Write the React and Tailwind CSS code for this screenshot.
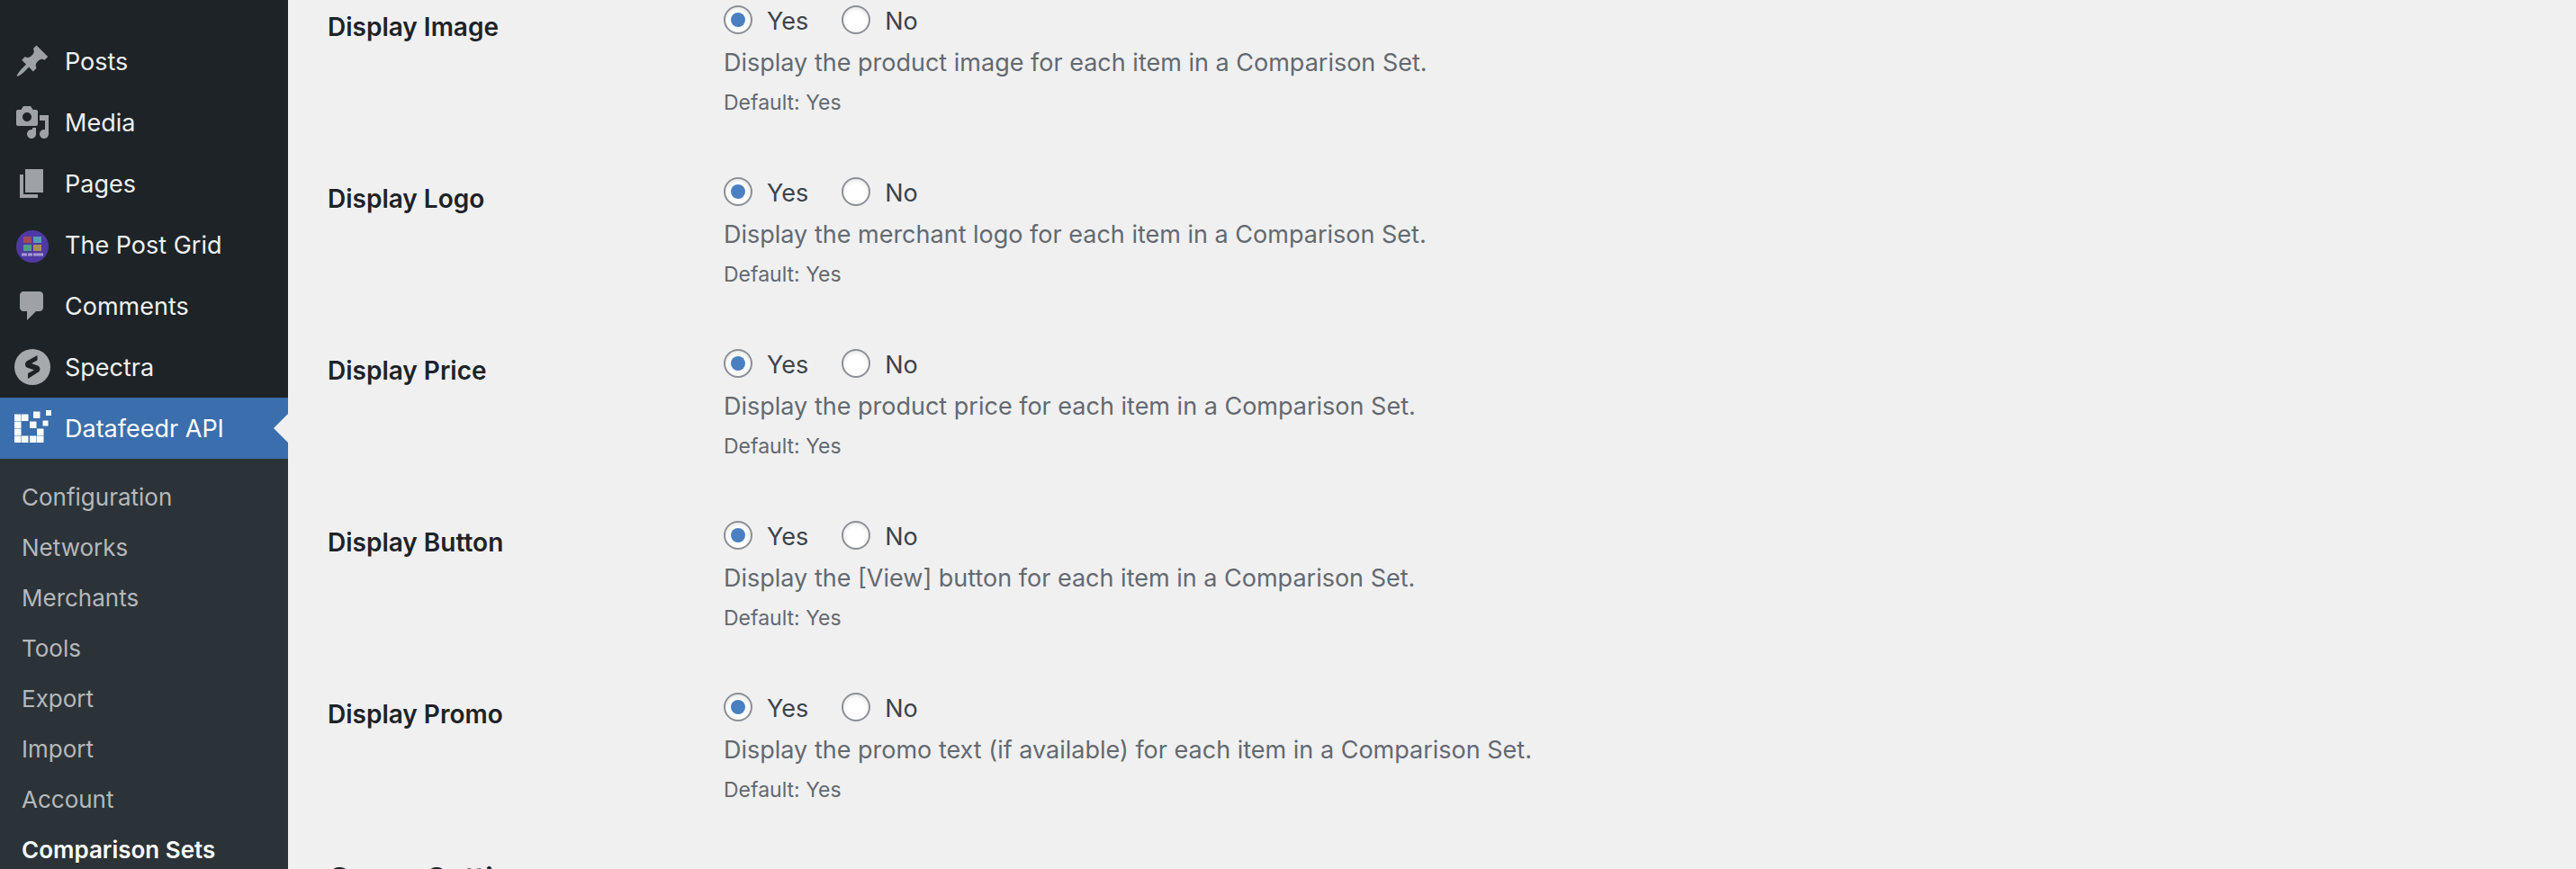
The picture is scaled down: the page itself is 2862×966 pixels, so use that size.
const menu = [
  { id: "posts", label: "Posts" },
  { id: "media", label: "Media" },
  { id: "pages", label: "Pages" },
  { id: "grid", label: "The Post Grid" },
  { id: "comments", label: "Comments" },
  { id: "spectra", label: "Spectra" },
];

const submenu = ["Configuration", "Networks", "Merchants", "Tools", "Export", "Import", "Account", "Comparison Sets"];

const settings = [
  { id: "image", label: "Display Image", text: "Display the product image for each item in a Comparison Set." },
  { id: "logo", label: "Display Logo", text: "Display the merchant logo for each item in a Comparison Set." },
  { id: "price", label: "Display Price", text: "Display the product price for each item in a Comparison Set." },
  { id: "button", label: "Display Button", text: "Display the [View] button for each item in a Comparison Set." },
  { id: "promo", label: "Display Promo", text: "Display the promo text (if available) for each item in a Comparison Set." },
];

function MenuIcon({ id }) {
  if (id === "grid") {
    return (
      <svg viewBox="0 0 36 36" className="mt-1 size-9" aria-hidden="true">
        <circle cx="18" cy="18" r="18" fill="#5039a4" />
        <rect x="8" y="7" width="9" height="7" fill="#a34a55" />
        <rect x="19" y="7" width="9" height="7" fill="#559db3" />
        <rect x="8" y="16" width="9" height="7" fill="#4f9f83" />
        <rect x="19" y="16" width="9" height="7" fill="#a98f55" />
        <path d="M6 27h6M13 27h5M19 27h11" stroke="#a79dd0" strokeWidth="3" />
      </svg>
    );
  }
  if (id === "spectra") {
    return (
      <svg viewBox="0 0 40 40" className="size-10" aria-hidden="true">
        <circle cx="20" cy="20" r="20" fill="#a7aaad" />
        <path d="M25.500 7v5.500l-6.500 3.500 7.500 2.700c2.600 1.400 2.400 5.300.3 6.900L15 33v-6l7-3.700-7.700-2.600c-3.100-1.400-3-5.600-.3-7.400z" fill="#1d2327" />
      </svg>
    );
  }
  const paths = {
    posts: "M10.440 3.020l1.820-1.820 6.360 6.350-1.830 1.820c-1.050-.680-2.480-.570-3.410.360l-.75.750c-.92.930-1.040 2.350-.35 3.410l-1.830 1.820-2.410-2.410-2.800 2.790c-.42.420-3.380 2.710-3.800 2.290s1.860-3.390 2.280-3.810l2.790-2.790L4.100 9.360l1.830-1.820c1.050.690 2.480.570 3.400-.360l.75-.75c.93-.92 1.050-2.350.36-3.410z",
    media: "M13 11V4c0-.55-.45-1-1-1h-1.670L9 1H5L3.670 3H2c-.55 0-1 .45-1 1v7c0 .55.45 1 1 1h10c.55 0 1-.45 1-1zM7 4.500c1.380 0 2.500 1.120 2.500 2.500S8.380 9.500 7 9.500 4.500 8.380 4.500 7 5.620 4.500 7 4.500zM14 6h5v10.500c0 1.380-1.120 2.500-2.500 2.500S14 17.880 14 16.500s1.120-2.500 2.500-2.500c.17 0 .34.020.5.050V9h-3V6zm-4 8.050V13h2v3.500c0 1.380-1.120 2.500-2.500 2.500S7 17.880 7 16.500 8.120 14 9.500 14c.17 0 .34.020.5.050z",
    pages: "M6 15V2h10v13H6zm-1 1h8v2H3V5h2v11z",
    comments: "M5 2h9c1.100 0 2 .9 2 2v7c0 1.100-.9 2-2 2h-2l-5 5v-5H5c-1.100 0-2-.9-2-2V4c0-1.100.9-2 2-2z",
  };
  return (
    <svg viewBox="0 0 20 20" className="size-10" fill="#9ea2a7" aria-hidden="true">
      <path d={paths[id]} />
    </svg>
  );
}

function DatafeedrIcon() {
  const cells = [
    [0, 4], [8, 4], [0, 12], [0, 20], [0, 28], [8, 28], [17, 28], [25, 28], [25, 20], [17, 12], [21, 1],
  ];
  return (
    <svg viewBox="0 0 42 40" className="h-10 w-[42px]" fill="#fff" aria-hidden="true">
      {cells.map(([x, y]) => (
        <rect key={`${x}-${y}`} x={x} y={y + 0.5} width="7.500" height="7.500" />
      ))}
      <rect x="31.500" y="11.500" width="6" height="6" />
      <rect x="35" y="0" width="6" height="6" />
    </svg>
  );
}

function Radio({ name, value, checked }) {
  return (
    <label className="flex items-start gap-4 pt-0.5">
      <input
        type="radio"
        name={name}
        value={value}
        defaultChecked={checked}
        className="relative size-8 appearance-none rounded-full border-2 border-[#8c8f94] bg-white shadow-[inset_0_2px_4px_rgba(0,0,0,0.1)] before:absolute before:inset-1.5 before:rounded-full checked:before:bg-[#4a80c2]"
      />
      <span className="text-[27px] leading-9 text-[#3c434a]">{value}</span>
    </label>
  );
}

export default function App() {
  return (
    <div className="flex h-screen overflow-hidden bg-[#f0f0f1] font-['Inter',sans-serif]">
      <nav aria-label="Admin menu" className="w-80 shrink-0 bg-[#1d2327] pt-[34px]">
        <ul>
          {menu.map((item) => (
            <li key={item.id}>
              <a href={`#${item.id}`} className="flex h-[68px] items-center text-[27px] text-[#f0f0f1]">
                <span className="flex w-[72px] justify-center">
                  <MenuIcon id={item.id} />
                </span>
                <span className="pt-0.5">{item.label}</span>
              </a>
            </li>
          ))}
          <li>
            <a href="#datafeedr" className="relative flex h-[68px] items-center bg-[#3b6eac] text-[27px] text-white">
              <span className="flex w-[72px] pl-4">
                <DatafeedrIcon />
              </span>
              <span className="pt-0.5">Datafeedr API</span>
              <span className="absolute right-0 border-y-16 border-r-16 border-y-transparent border-r-[#f0f0f1]" />
            </a>
            <ul className="bg-[#2c3338] pt-3.5 pb-4">
              {submenu.map((label) => (
                <li key={label}>
                  <a
                    href={`#${label}`}
                    className={
                      label === "Comparison Sets"
                        ? "flex h-14 items-center px-6 text-[26px] font-semibold text-white"
                        : "flex h-14 items-center px-6 text-[26px] text-[#b5b8bb]"
                    }
                  >
                    {label}
                  </a>
                </li>
              ))}
            </ul>
          </li>
        </ul>
      </nav>
      <main className="grow pl-11">
        {settings.map((item) => (
          <div key={item.id} role="radiogroup" aria-labelledby={item.id} className="flex h-[191px]">
            <h3 id={item.id} className="w-[440px] pt-3 text-[28px] leading-9 font-semibold text-[#1d2327]">
              {item.label}
            </h3>
            <div className="pt-1">
              <div className="flex gap-[37px]">
                <Radio name={item.id} value="Yes" checked />
                <Radio name={item.id} value="No" />
              </div>
              <p className="mt-2.5 text-[27px] leading-9 text-[#646970]">{item.text}</p>
              <p className="mt-2 text-[23px] leading-9 text-[#646970]">Default: Yes</p>
            </div>
          </div>
        ))}
        <h2 className="pt-0.5 text-[34px] leading-10 font-semibold text-[#1d2327]">Query Settings</h2>
      </main>
    </div>
  );
}
